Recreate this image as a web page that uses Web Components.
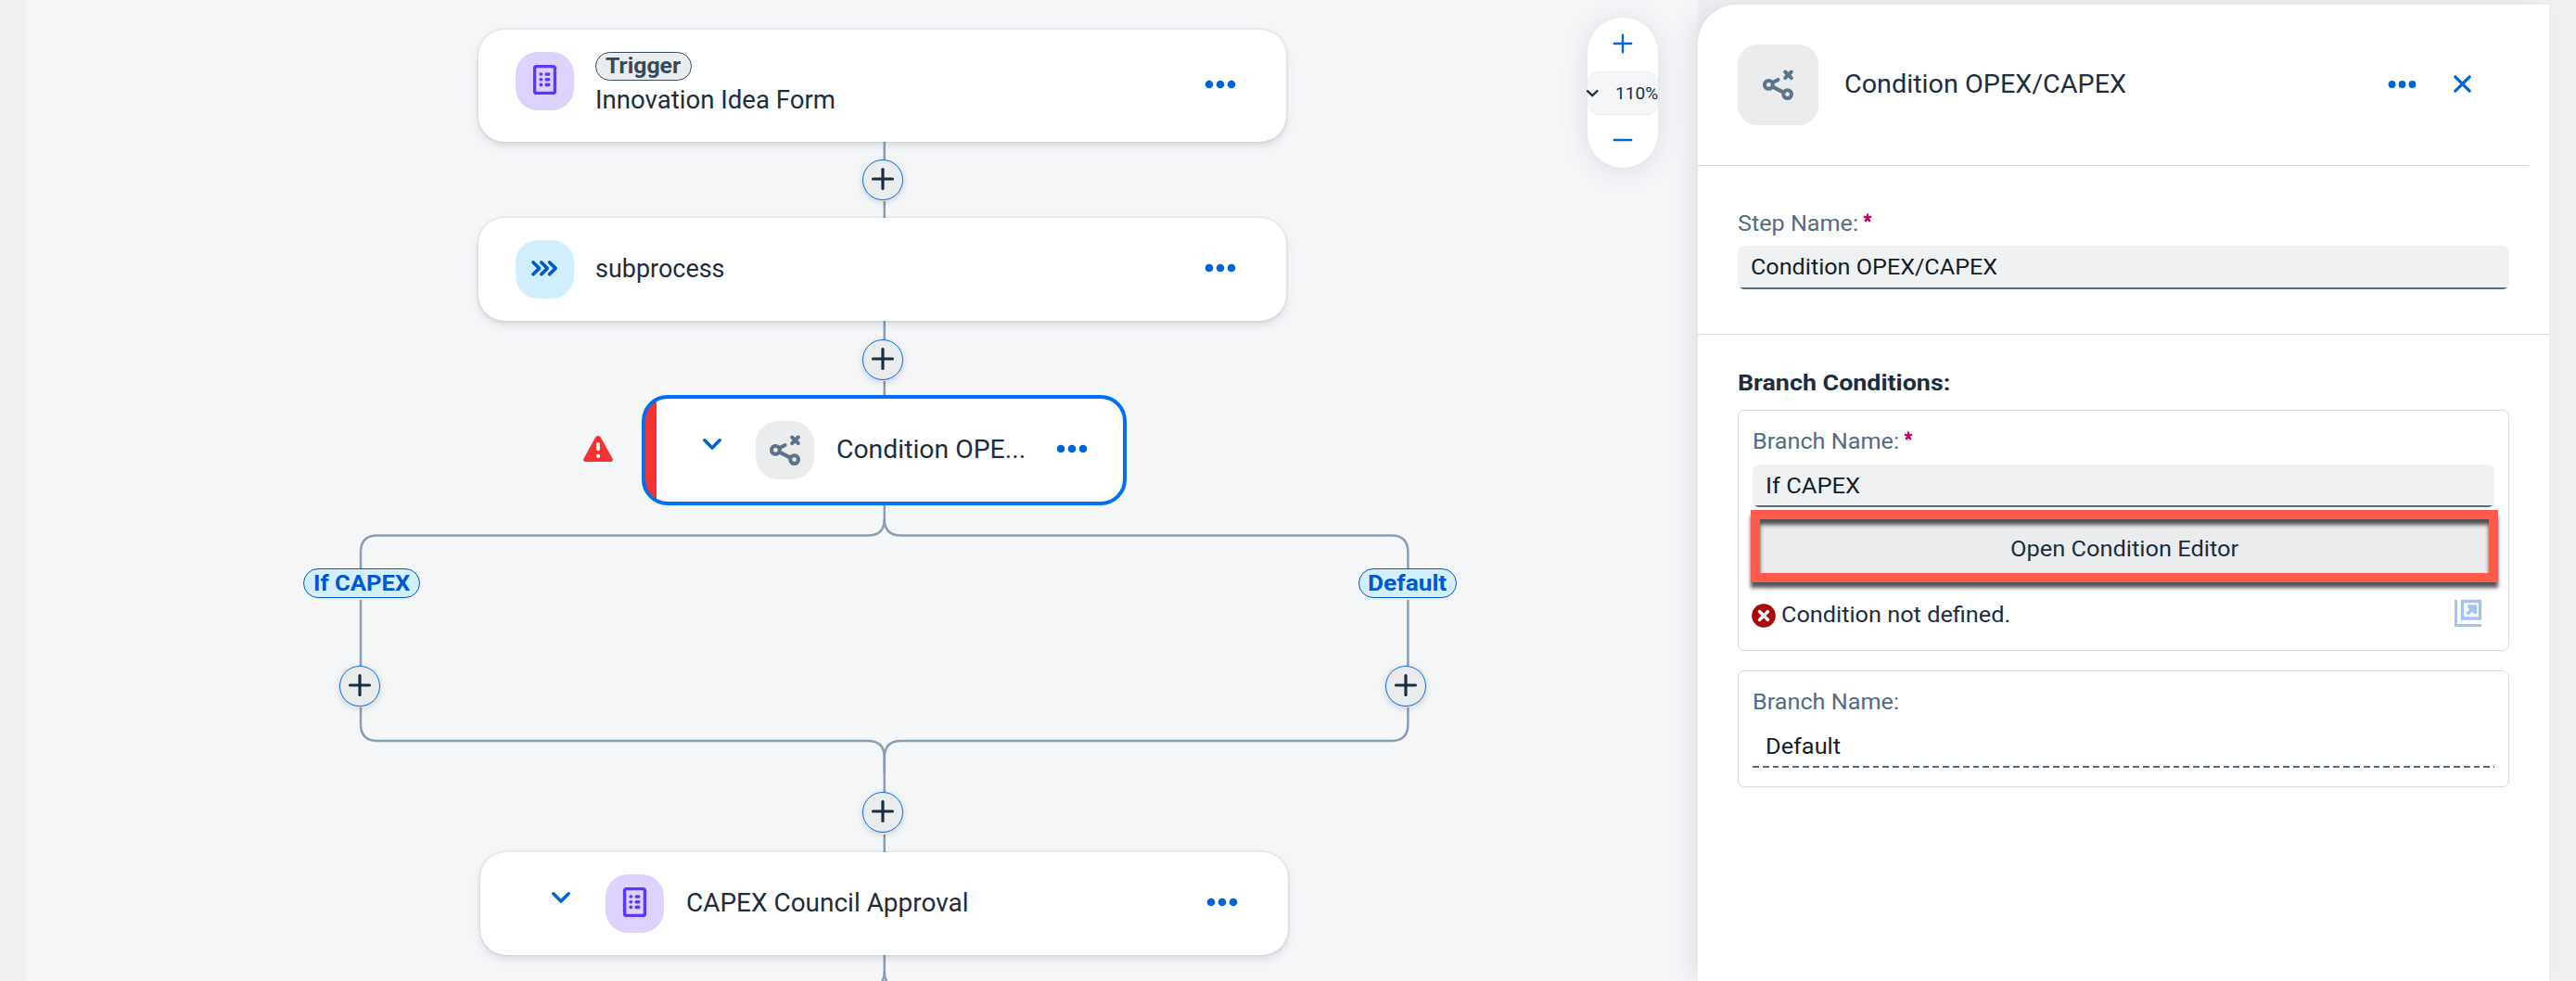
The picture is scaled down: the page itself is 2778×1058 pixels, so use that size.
<!DOCTYPE html>
<html lang="en">
<head>
<meta charset="utf-8">
<title>Process Builder</title>
<style>
html,body{margin:0;height:100%}
body{font-family:Roboto,"Liberation Sans",sans-serif;color:#1d2d3e;background:#eff0f2;overflow:hidden}
</style>
</head>
<body>
<process-builder></process-builder>
<script>
class Base extends HTMLElement {
  constructor() { super(); this.attachShadow({ mode: 'open' }); }
  connectedCallback() { this.shadowRoot.innerHTML = this.render(); this.ready && this.ready(); }
  at(name, fallback = '') { return this.hasAttribute(name) ? this.getAttribute(name) : fallback; }
}

/* One line of text stretched to a given ink width. */
customElements.define('fit-text', class extends Base {
  render() {
    return `<style>:host{display:block;white-space:pre;flex:none;width:max-content}span{display:inline-block;transform-origin:0 50%}</style><span><slot></slot></span>`;
  }
  ready() {
    const span = this.shadowRoot.querySelector('span');
    const w = span.getBoundingClientRect().width, k = (+this.at('w') - 0.5) / (w - 2.5);
    span.style.transform = `scaleX(${k.toFixed(4)})`;
    this.style.width = (w * k).toFixed(2) + 'px';
  }
});

const ICONS = {
  form: ['25 32', `<rect x="1.6" y="1.6" width="21.8" height="28.8" rx="2" fill="none" stroke="currentColor" stroke-width="3.4"/><g stroke="currentColor" stroke-width="3.6" stroke-linecap="round"><path d="M8.2 10h.4M8.2 15.7h.4M8.2 21.4h.4M14.2 10h2.6M14.2 15.7h2.6M14.2 21.4h2.6"/></g>`],
  process: ['28 17', `<path d="M2 2l6.5 6.4L2 14.8M10.8 2l6.5 6.4-6.5 6.4M19.6 2l6.5 6.4-6.5 6.4" fill="none" stroke="currentColor" stroke-width="3.6" stroke-linecap="round" stroke-linejoin="round"/>`],
  branch: ['33 33', `<g fill="none" stroke="currentColor" stroke-width="4" stroke-linecap="round"><circle cx="6.4" cy="16.4" r="4.4"/><circle cx="26.6" cy="26.6" r="4.4"/><path d="M10.8 14l5.8-3M10.7 18.6l11.7 6M24.2 2.5l6.6 6.6M30.8 2.5l-6.6 6.6" /></g>`],
  more: ['34 10', `<g fill="currentColor"><circle cx="5" cy="5" r="4.3"/><circle cx="17" cy="5" r="4.3"/><circle cx="29" cy="5" r="4.3"/></g>`],
  down: ['20 13', `<path d="M1.8 1.8L10 10l8.2-8.2" fill="none" stroke="currentColor" stroke-width="3.6" stroke-linecap="round" stroke-linejoin="round"/>`],
  downthin: ['12 8', `<path d="M0 1.2l5.2 5L10.6 1" fill="none" stroke="currentColor" stroke-width="2.3" stroke-linecap="round" stroke-linejoin="round"/>`],
  plus: ['24 24', `<path d="M12 1.5v21M1.5 12h21" stroke="currentColor" stroke-width="3.2" stroke-linecap="round"/>`],
  zoomin: ['20 20', `<path d="M10 .8v18.4M.8 10h18.4" stroke="currentColor" stroke-width="2.4" stroke-linecap="round"/>`],
  zoomout: ['20 20', `<path d="M.8 10h18.4" stroke="currentColor" stroke-width="2.4" stroke-linecap="round"/>`],
  close: ['19 19', `<path d="M1.8 1.8l15.4 15.4M17.2 1.8L1.8 17.2" stroke="currentColor" stroke-width="3.2" stroke-linecap="round"/>`],
  alert: ['32 28', `<path d="M16 0c1.5 0 2.5.8 3.2 2.2L31.5 24.4c1 1.8 0 3.6-2 3.6H2.5c-2 0-3-1.8-2-3.6L12.8 2.2C13.5 .8 14.5 0 16 0z" fill="currentColor"/><path d="M16 8.8v5.6" stroke="#fff" stroke-width="3.7" stroke-linecap="round"/><circle cx="16" cy="21.8" r="2.1" fill="#fff"/>`],
  error: ['26 26', `<circle cx="13" cy="13" r="12.8" fill="currentColor"/><path d="M8.5 8.5l9 9M17.5 8.5l-9 9" stroke="#fff" stroke-width="3.4" stroke-linecap="round"/>`],
  open: ['29 29', `<g fill="none" stroke="currentColor" stroke-width="3"><path d="M1.5 0v27.5H29"/><rect x="8.5" y="1.5" width="19" height="18.5" stroke-width="3.4"/><path d="M13.8 15.4l8-8" stroke-width="3.4"/></g><path d="M14.2 5.2H24.200V15h-3.200L14.200 8.400z" fill="currentColor"/>`]
};
customElements.define('ui-icon', class extends Base {
  render() {
    const [box, body] = ICONS[this.at('name')], [w, h] = box.split(' ');
    return `<style>:host{display:block;flex:none;width:${w}px;height:${h}px}svg{display:block;overflow:visible}</style><svg width="${w}" height="${h}" viewBox="0 0 ${w} ${h}">${body}</svg>`;
  }
});

customElements.define('icon-tile', class extends Base {
  render() {
    const tones = { violet: ['#ded3ff', '#5d36ff'], blue: ['#d1efff', '#0057d2'], grey: ['#eaecee', '#5b738b'] };
    const [bg, fg] = tones[this.at('tone')], s = this.at('size', '63');
    return `<style>:host{display:flex;flex:none;align-items:center;justify-content:center;box-sizing:border-box;width:${s}px;height:${s}px;border-radius:${s > 70 ? 21 : 24}px;background:${bg};color:${fg};padding-bottom:${this.at('lift', '2')}px}</style><ui-icon name="${this.at('icon')}"></ui-icon>`;
  }
});

/* A step of the flow. */
customElements.define('flow-card', class extends Base {
  render() {
    return `<style>
      :host{position:absolute;display:flex;align-items:flex-start;box-sizing:border-box;background:#fff;border-radius:28px;padding:24px 54px 0 39.5px;
        box-shadow:0 0 3px rgba(34,53,72,.16),0 4px 9px rgba(34,53,72,.14);font-size:27px;line-height:32px}
      :host([error]){border:4px solid #0070f2;box-shadow:none;padding:24px 38px 0 62px;background:linear-gradient(90deg,#f53232 12px,#fff 12px)}
      :host([nested]){padding-left:77px}
      .toggle{color:#0064d9;margin:19px 38px 0 0}
      :host([error]) .toggle{margin-right:37px}
      .body{display:flex;flex-direction:column;margin-left:23.5px;flex:1}
      .more{color:#0064d9;margin-top:var(--more,25px)}
    </style>
    ${this.hasAttribute('toggle') ? '<ui-icon class="toggle" name="down"></ui-icon>' : ''}
    <icon-tile icon="${this.at('icon')}" tone="${this.at('tone')}" lift="${this.at('lift', '3')}"></icon-tile>
    <div class="body"><slot></slot></div>
    <ui-icon class="more" name="more"></ui-icon>`;
  }
});

customElements.define('flow-add', class extends Base {
  render() {
    return `<style>:host{position:absolute;display:flex;justify-content:center;align-items:center;box-sizing:border-box;width:44px;height:44px;padding-bottom:2px;border:1px solid #0070f2;border-radius:50%;background:#eaecee;color:#1d2d3e;box-shadow:0 2px 7px rgba(34,53,72,.2)}</style><ui-icon name="plus"></ui-icon>`;
  }
});

customElements.define('flow-tag', class extends Base {
  render() {
    return `<style>:host{display:flex;box-sizing:border-box;justify-content:center;align-items:center;width:${this.at('width')}px;height:32px;border:1px solid #0057d2;border-radius:16px;background:#d1efff;color:#0057d2;font-weight:700;font-size:24px;line-height:30px}
    :host([quiet]){height:31px;border-color:#354a5f;background:#eaecee;color:#354a5f;line-height:29px}
    :host([pin]){position:absolute}</style><slot></slot>`;
  }
});

customElements.define('zoom-control', class extends Base {
  render() {
    return `<style>
      :host{position:absolute;display:flex;flex-direction:column;align-items:center;box-sizing:border-box;width:76px;height:162px;border-radius:38px;background:#fff;color:#0064d9;box-shadow:0 3px 28px rgba(34,53,72,.12);padding-top:18px}
      .level{display:flex;align-items:center;justify-content:space-between;box-sizing:border-box;width:76px;height:47px;margin:20px 0 17px;border-radius:12px;background:#f5f6f7;border:solid #e9ebed;border-width:1px 0;color:#1d2d3e;font-size:18.3px;line-height:43px}
    </style><ui-icon name="zoomin"></ui-icon><div class="level"><ui-icon name="downthin"></ui-icon><fit-text w="44">110%</fit-text></div><ui-icon name="zoomout"></ui-icon>`;
  }
});

customElements.define('flow-canvas', class extends Base {
  render() {
    return `<style>
      :host{display:block;position:relative;overflow:hidden;background:#f5f6f8}
      .plane{position:absolute;left:-28px;top:0;width:1831px;height:1058px}
      svg{position:absolute;left:0;top:0}
      .alert{position:absolute;color:#f53232}
      .t{margin-top:15px}
    </style>
    <div class="plane">
      <svg width="1831" height="1058" fill="none" stroke="#8b9db3" stroke-width="2.5">
        <path d="M953.8 153v19M953.8 217v18M953.8 346v20M953.8 411v16M953.8 545v16M953.8 832v22M953.8 900v20M953.8 1030v20"/>
        <path d="M953.8 560q0 17.6-18 17.6H407q-18 0-18 18V613M389 647v71M389 763v18q0 18 18 18H935.8q18 0 18 18v16"/>
        <path d="M953.8 560q0 17.6 18 17.6H1500.4q18 0 18 18V613M1518.4 647v71M1518.4 763v18q0 18-18 18H971.8q-18 0-18 18v16"/>
        <path d="M953.8 1048q0 10-6 15M953.8 1048q0 10 6 15"/>
      </svg>
      <flow-card icon="form" tone="violet" lift="3" style="left:516px;top:32px;width:871px;height:121px;--more:30px">
        <flow-tag quiet width="104"><fit-text w="79">Trigger</fit-text></flow-tag>
        <fit-text w="257" style="margin-top:5px">Innovation Idea Form</fit-text>
      </flow-card>
      <flow-card icon="process" tone="blue" lift="2" style="left:516px;top:235px;width:871px;height:111px">
        <fit-text class="t" w="137.5">subprocess</fit-text>
      </flow-card>
      <ui-icon class="alert" name="alert" style="left:628.5px;top:470px"></ui-icon>
      <flow-card error toggle icon="branch" tone="grey" lift="0" style="left:692px;top:426px;width:523px;height:119px">
        <fit-text class="t" w="202">Condition OPE...</fit-text>
      </flow-card>
      <flow-tag pin width="126" style="left:327px;top:613px"><fit-text w="102">If CAPEX</fit-text></flow-tag>
      <flow-tag pin width="106" style="left:1465px;top:613px"><fit-text w="83">Default</fit-text></flow-tag>
      <flow-card nested toggle icon="form" tone="violet" lift="3" style="left:518px;top:919px;width:871px;height:111px">
        <fit-text class="t" w="302.5">CAPEX Council Approval</fit-text>
      </flow-card>
      <flow-add style="left:930px;top:172px"></flow-add>
      <flow-add style="left:930px;top:366px"></flow-add>
      <flow-add style="left:366px;top:718px"></flow-add>
      <flow-add style="left:1494px;top:718px"></flow-add>
      <flow-add style="left:930px;top:854px"></flow-add>
      <zoom-control style="left:1712px;top:19px"></zoom-control>
    </div>`;
  }
});

customElements.define('form-field', class extends Base {
  render() {
    const ro = this.hasAttribute('readonly');
    return `<style>
      :host{display:block}
      .label{display:flex;font-size:24.5px;line-height:31px;color:#556b82}
      .req{width:10px;height:10px;margin:5px 0 0 4.5px;color:#ba066c;flex:none}
      .box{box-sizing:border-box;height:var(--h,47px);margin-top:var(--gap,9px);padding-left:13.5px;font-size:24.5px;line-height:var(--lh,46px);color:#131e29;border-radius:7px;background:linear-gradient(#556b82,#556b82) 0 100%/100% 2px no-repeat,#eff1f2}
      .box.ro{border-radius:0;background:repeating-linear-gradient(90deg,#556b82 0 6.8px,transparent 6.8px 10.8px) 0 100%/100% 2px no-repeat}
    </style>
    <div class="label"><fit-text w="${this.at('lw')}">${this.at('label')}</fit-text>${ro ? '' : '<svg class="req" viewBox="0 0 10 10"><path d="M5 5V.6M5 5L.9 3.7M5 5l4.1-1.3M5 5L2.3 9M5 5l2.7 4" stroke="currentColor" stroke-width="2.3"/></svg>'}</div>
    <div class="box${ro ? ' ro' : ''}"><fit-text w="${this.at('vw')}">${this.at('value')}</fit-text></div>`;
  }
});

customElements.define('branch-box', class extends Base {
  render() {
    return `<style>:host{display:block;box-sizing:border-box;border:1px solid #d9d9d9;border-radius:7px;padding:17px 15px 0}</style><slot></slot>`;
  }
});

customElements.define('step-panel', class extends Base {
  render() {
    return `<style>
      :host{display:flex;flex-direction:column;box-sizing:border-box;margin-top:5px;border-radius:42px 0 0 0;background:#fff;box-shadow:-10px 0 26px -4px rgba(34,53,72,.11);position:relative}
      header{display:flex;align-items:flex-start;box-sizing:border-box;height:174px;margin-right:22px;padding:43px 62px 0 43px;border-bottom:1px solid #d9d9d9;font-size:28px;line-height:34px}
      header fit-text{margin:26px 0 0 28px}
      .sp{flex:1}
      .act{color:#0064d9}
      .more{margin:38px 40px 0 0;transform:scale(.91);transform-origin:right}
      .close{margin-top:33px}
      .name{box-sizing:border-box;height:182px;padding:46px 43px 0;border-bottom:1px solid #d9d9d9}
      .branches{padding:36px 43px 0}
      h2{margin:0;font-size:24.5px;line-height:32px;font-weight:700}
      .mark{display:flex;align-items:center;justify-content:center;box-sizing:border-box;height:78px;margin:3px -4px 0 -2px;padding-top:5px;border:10px solid #ff5a4c;background:#eaecee;font-size:24.5px;line-height:30px;box-shadow:0 6px 4px rgba(0,0,0,.66),inset 0 6px 4px rgba(0,0,0,.66)}
      .msg{display:flex;align-items:flex-start;margin-top:19px;padding-right:14px;font-size:24.5px;line-height:31px}
      .msg .e{color:#aa0808;margin:3.5px 6px 0 -1px}
      .msg .o{color:#a3c4f3}
    </style>
    <header>
      <icon-tile icon="branch" tone="grey" size="87" lift="0"></icon-tile>
      <fit-text w="302">Condition OPEX/CAPEX</fit-text>
      <span class="sp"></span>
      <ui-icon class="act more" name="more"></ui-icon>
      <ui-icon class="act close" name="close"></ui-icon>
    </header>
    <section class="name"><form-field label="Step Name:" lw="128" value="Condition OPEX/CAPEX" vw="264"></form-field></section>
    <section class="branches">
      <h2><fit-text w="227">Branch Conditions:</fit-text></h2>
      <branch-box style="margin-top:13px;height:260px">
        <form-field label="Branch Name:" lw="156" value="If CAPEX" vw="100" style="--gap:10px;--h:46px;--lh:45px"></form-field>
        <div class="mark"><fit-text w="244">Open Condition Editor</fit-text></div>
        <div class="msg"><ui-icon class="e" name="error"></ui-icon><fit-text w="245">Condition not defined.</fit-text><span class="sp"></span><ui-icon class="o" name="open"></ui-icon></div>
      </branch-box>
      <branch-box style="margin-top:21px;height:126px">
        <form-field readonly label="Branch Name:" lw="156" value="Default" vw="79" style="--gap:11px;--h:45px;--lh:43px"></form-field>
      </branch-box>
    </section>`;
  }
});

customElements.define('process-builder', class extends Base {
  render() {
    return `<style>:host{display:grid;grid-template-columns:28px 1803px 918px 29px;height:1058px;width:2778px;overflow:hidden}flow-canvas{grid-column:2}step-panel{grid-column:3}</style><flow-canvas></flow-canvas><step-panel></step-panel>`;
  }
});
</script>
</body>
</html>
